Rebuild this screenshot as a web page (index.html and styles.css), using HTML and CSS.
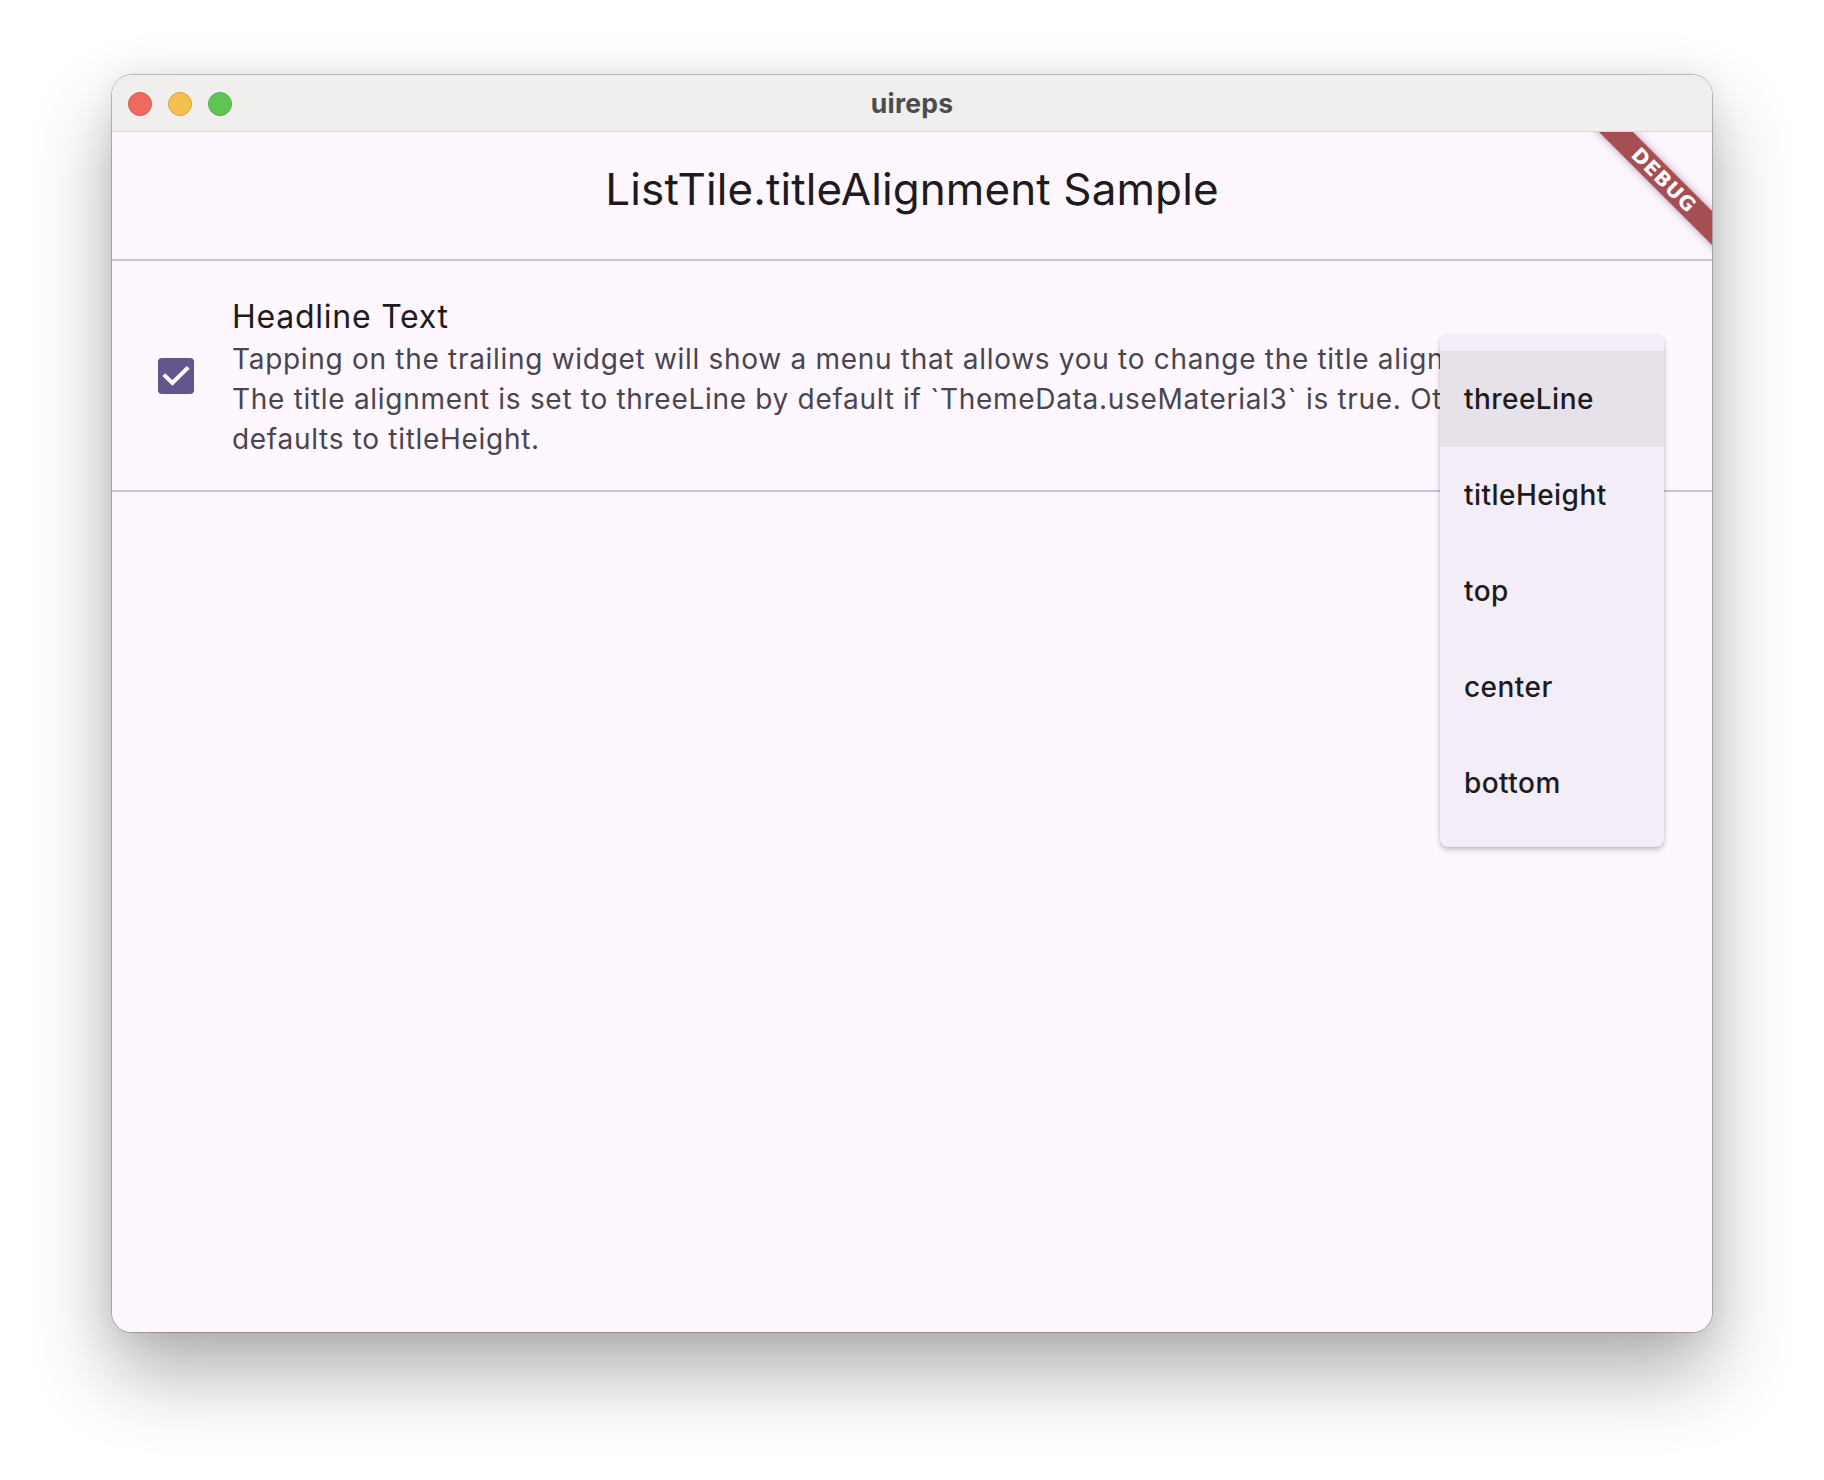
FILE: index.html
```html
<!DOCTYPE html>
<html lang="en">
<head>
<meta charset="utf-8">
<title>uireps</title>
<link rel="stylesheet" href="styles.css">
</head>
<body>
<div class="window">
  <div class="titlebar">
    <div class="lights">
      <span class="light red"></span>
      <span class="light yellow"></span>
      <span class="light green"></span>
    </div>
    <div class="wtitle">uireps</div>
    <div class="spacer"></div>
  </div>
  <div class="content">
    <header class="appbar">
      <h1 class="appbar-title">ListTile.titleAlignment Sample</h1>
    </header>
    <div class="tile">
      <div class="check">
        <svg width="36" height="36" viewBox="0 0 36 36">
          <rect x="0" y="0" width="36" height="36" rx="4" fill="#65558F"/>
          <polyline points="5.8,16.6 14.4,25 30.2,9.4" fill="none" stroke="#FFFFFF" stroke-width="4"/>
        </svg>
      </div>
      <div class="texts">
        <div class="headline">Headline Text</div>
        <div class="subtitle">
          <div class="line">Tapping on the trailing widget will show a menu that allows you to change the title alignment.</div>
          <div class="line">The title alignment is set to threeLine by default if `ThemeData.useMaterial3` is true. Otherwise,</div>
          <div class="line">defaults to titleHeight.</div>
        </div>
      </div>
    </div>
    <div class="menu">
      <div class="item active">threeLine</div>
      <div class="item">titleHeight</div>
      <div class="item">top</div>
      <div class="item">center</div>
      <div class="item">bottom</div>
    </div>
    <div class="banner-wrap"><div class="banner">DEBUG</div></div>
  </div>
</div>
</body>
</html>
```

FILE: styles.css
```css
html, body {
  margin: 0;
  padding: 0;
  background: #ffffff;
}
body {
  padding: 75px 112px 148px 112px;
  font-family: Inter, "Noto Sans", "Liberation Sans", sans-serif;
}
.window {
  width: 1600px;
  border-radius: 20px;
  overflow: hidden;
  background: #FEF7FF;
  box-shadow: 0 0 0 1px rgba(0,0,0,0.22), 0 40px 80px rgba(0,0,0,0.32), 0 0 30px rgba(0,0,0,0.08);
}
.titlebar {
  height: 56px;
  background: #F0EFED;
  border-bottom: 1px solid #D9D8D6;
  display: grid;
  grid-template-columns: 1fr auto 1fr;
  align-items: center;
}
.lights {
  display: flex;
  gap: 16px;
  padding-left: 16px;
  padding-top: 2px;
}
.light {
  width: 22px;
  height: 22px;
  border-radius: 50%;
  border: 1px solid;
}
.red { background: #EE6A5F; border-color: #D5574D; }
.yellow { background: #F5BF4F; border-color: #D6A142; }
.green { background: #61C554; border-color: #52AB43; }
.wtitle {
  font-family: Inter, "Liberation Sans", sans-serif;
  font-weight: 700;
  font-size: 26.5px;
  color: #4C4C4C;
  letter-spacing: 0.2px;
}
.content {
  position: relative;
  height: 1200px;
  background: #FEF7FF;
  overflow: hidden;
}
.appbar {
  height: 127px;
  display: flex;
  align-items: center;
  justify-content: center;
}
.appbar-title {
  margin: 0;
  font-weight: 400;
  font-size: 44px;
  color: #1D1B20;
  letter-spacing: 0.1px;
  padding-bottom: 14px;
}
.tile {
  border-top: 2px solid #CAC4D0;
  border-bottom: 2px solid #CAC4D0;
  display: flex;
  align-items: center;
  padding: 32px 0 31px 46px;
  gap: 38px;
}
.check {
  width: 36px;
  height: 36px;
  flex: none;
}
.check svg { display: block; }
.texts {
  min-width: 0;
}
.headline {
  font-size: 32px;
  line-height: 48px;
  color: #1D1B20;
  letter-spacing: 0.75px;
}
.subtitle {
  font-size: 28px;
  line-height: 40px;
  color: #49454F;
  letter-spacing: 0.7px;
  margin-top: -2px;
}
.line {
  white-space: nowrap;
}
.menu {
  position: absolute;
  left: 1328px;
  top: 203px;
  width: 224px;
  padding: 16px 0;
  background: #F3EDF7;
  border-radius: 8px;
  box-shadow: 0 3px 6px rgba(0,0,0,0.18), 0 1px 3px rgba(0,0,0,0.12);
}
.item {
  height: 96px;
  display: flex;
  align-items: center;
  padding-left: 24px;
  font-size: 28px;
  font-weight: 500;
  color: #1D1B20;
  letter-spacing: 0.45px;
}
.item.active {
  background: #E7E1EA;
}
.banner-wrap {
  position: absolute;
  top: 0;
  right: 0;
  width: 160px;
  height: 160px;
  overflow: hidden;
}
.banner {
  position: absolute;
  left: 12px;
  top: 36px;
  width: 200px;
  height: 24px;
  line-height: 24px;
  background: #A64F53;
  color: #FFFFFF;
  font-family: "DejaVu Sans", "Liberation Sans", sans-serif;
  font-weight: 700;
  font-size: 20px;
  letter-spacing: 0.8px;
  text-align: center;
  transform: rotate(45deg);
  box-shadow: 0 0 10px rgba(60,0,60,0.35);
}
```
